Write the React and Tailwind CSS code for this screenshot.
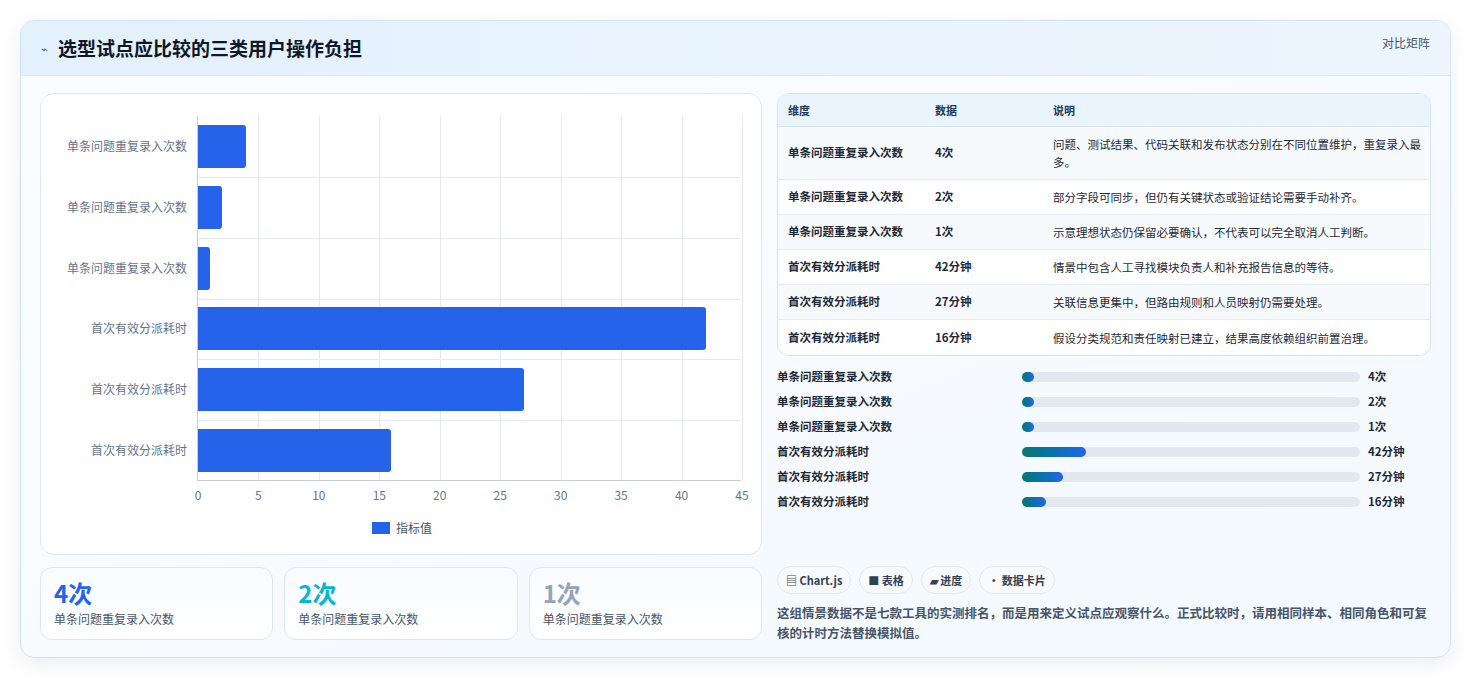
export default function App(){
const F={fontFamily:'"Noto Sans CJK SC","Noto Sans",sans-serif'};
const rows=[['单条问题重复录入次数',4],['单条问题重复录入次数',2],['单条问题重复录入次数',1],['首次有效分派耗时',42],['首次有效分派耗时',27],['首次有效分派耗时',16]];
const tbl=[['单条问题重复录入次数','4次','问题、测试结果、代码关联和发布状态分别在不同位置维护，重复录入最多。'],['单条问题重复录入次数','2次','部分字段可同步，但仍有关键状态或验证结论需要手动补齐。'],['单条问题重复录入次数','1次','示意理想状态仍保留必要确认，不代表可以完全取消人工判断。'],['首次有效分派耗时','42分钟','情景中包含人工寻找模块负责人和补充报告信息的等待。'],['首次有效分派耗时','27分钟','关联信息更集中，但路由规则和人员映射仍需要处理。'],['首次有效分派耗时','16分钟','假设分类规范和责任映射已建立，结果高度依赖组织前置治理。']];
const prog=[['单条问题重复录入次数','4次','3.5%'],['单条问题重复录入次数','2次','3.5%'],['单条问题重复录入次数','1次','3.5%'],['首次有效分派耗时','42分钟','19%'],['首次有效分派耗时','27分钟','12%'],['首次有效分派耗时','16分钟','7%']];
return(<div style={F} className="w-[1471px] h-[678px] bg-white pt-[20px] px-[20px]">
<div className="w-[1431px] h-[638px] rounded-[14px] border border-[#cfe3f3] bg-gradient-to-br from-[#fbfdff] to-[#f3f9fe] shadow-[0_6px_20px_rgba(15,40,80,0.08)] overflow-hidden">
<div className="h-[55px] flex items-center justify-between px-[20px] bg-gradient-to-r from-[#e3f1fd] to-[#edf5fe] border-b border-[#d6e8f7]">
<div className="flex items-center gap-[10px]"><span className="text-[#2563eb] text-[11px]">⌁</span><span className="text-[19px] font-bold text-[#0f172a]">选型试点应比较的三类用户操作负担</span></div>
<span className="text-[12px] text-[#475569] -mt-[10px]">对比矩阵</span></div>
<div className="flex gap-[15px] px-[19px] pt-[17px]">
<div className="w-[723px] flex flex-col gap-[12px]">
<div className="h-[462px] rounded-[14px] border border-[#dde8f2] bg-white relative">
<div className="absolute left-[156px] top-[22px] w-[544px] h-[365px] border-l border-b border-[#c7ccd6]">
{[1,2,3,4,5,6,7,8,9].map(i=><div key={i} className="absolute top-0 bottom-0 border-l border-[#e5e9ef]" style={{left:i*544/9}}/>)}
{[1,2,3,4,5].map(i=><div key={i} className="absolute left-0 right-0 border-t border-[#e5e9ef]" style={{top:i*365/6}}/>)}
{rows.map((r,i)=><div key={i} className="absolute left-0 h-[43px] bg-[#2563eb] rounded-r-[3px]" style={{top:i*60.8+9,width:r[1]*544/45}}/>)}
{rows.map((r,i)=><div key={i} className="absolute right-[554px] whitespace-nowrap text-[12px] text-[#64748b] text-right" style={{top:i*60.8+21}}>{r[0]}</div>)}
{[0,5,10,15,20,25,30,35,40,45].map((v,i)=><div key={v} className="absolute top-[370px] text-[12px] text-[#64748b] -translate-x-1/2" style={{left:i*544/9}}>{v}</div>)}
</div>
<div className="absolute top-[425px] left-[331px] flex items-center gap-[6px] text-[12px] text-[#475569]"><span className="w-[18px] h-[12px] bg-[#2563eb]"/>指标值</div>
</div>
<div className="grid grid-cols-3 gap-[11px]">
{[['4次','text-[#2563eb]'],['2次','text-[#06b6d4]'],['1次','text-[#94a3b8]']].map(([v,c],i)=><div key={i} className="h-[73px] rounded-[12px] border border-[#dbe7f3] bg-gradient-to-b from-[#f8fbff] to-white px-[13px] pt-[10px]">
<div className={`text-[24px] font-bold leading-[30px] ${c}`}>{v}</div><div className="text-[12px] text-[#475569] mt-[2px]">单条问题重复录入次数</div></div>)}
</div></div>
<div className="w-[655px]">
<div className="rounded-[12px] border border-[#d5e3ef] overflow-hidden bg-white">
<div className="h-[33px] bg-[#eaf4fd] border-b border-[#d5e3ef] flex items-center text-[11px] font-bold text-[#1e3a5f]"><span className="w-[157px] pl-[10px]">维度</span><span className="w-[118px]">数据</span><span>说明</span></div>
{tbl.map((r,i)=><div key={i} className={`flex items-center text-[11.5px] text-[#1f2937] border-b border-[#e3ecf4] last:border-b-0 ${i==0?'h-[53px]':'h-[35px]'} ${i%2==0?'bg-[#f6fafd]':'bg-white'}`}>
<span className="w-[157px] pl-[10px] font-semibold">{r[0]}</span><span className="w-[118px] font-semibold">{r[1]}</span><span className="flex-1 pr-[8px] leading-[18px]">{r[2]}</span></div>)}
</div>
<div className="mt-[12px] flex flex-col gap-[7px]">
{prog.map((p,i)=><div key={i} className="flex items-center h-[18px] text-[11.5px] font-semibold text-[#1f2937]"><span className="w-[245px]">{p[0]}</span>
<div className="w-[338px] h-[10px] rounded-full bg-[#e2e8f0]"><div className="h-full rounded-full bg-gradient-to-r from-[#0f766e] to-[#2563eb]" style={{width:p[2]}}/></div><span className="ml-[8px]">{p[1]}</span></div>)}
</div>
<div className="mt-[55px] flex gap-[8px]">
{['▤ Chart.js','■ 表格','▰ 进度','• 数据卡片'].map(t=><span key={t} className="h-[28px] px-[8px] rounded-full border border-[#e2e8f0] bg-[#f8fafc] text-[11px] font-semibold text-[#334155] flex items-center">{t}</span>)}
</div>
<p className="mt-[9px] text-[12.5px] leading-[20px] text-[#475569] font-semibold">这组情景数据不是七款工具的实测排名，而是用来定义试点应观察什么。正式比较时，请用相同样本、相同角色和可复核的计时方法替换模拟值。</p>
</div></div></div></div>);}
